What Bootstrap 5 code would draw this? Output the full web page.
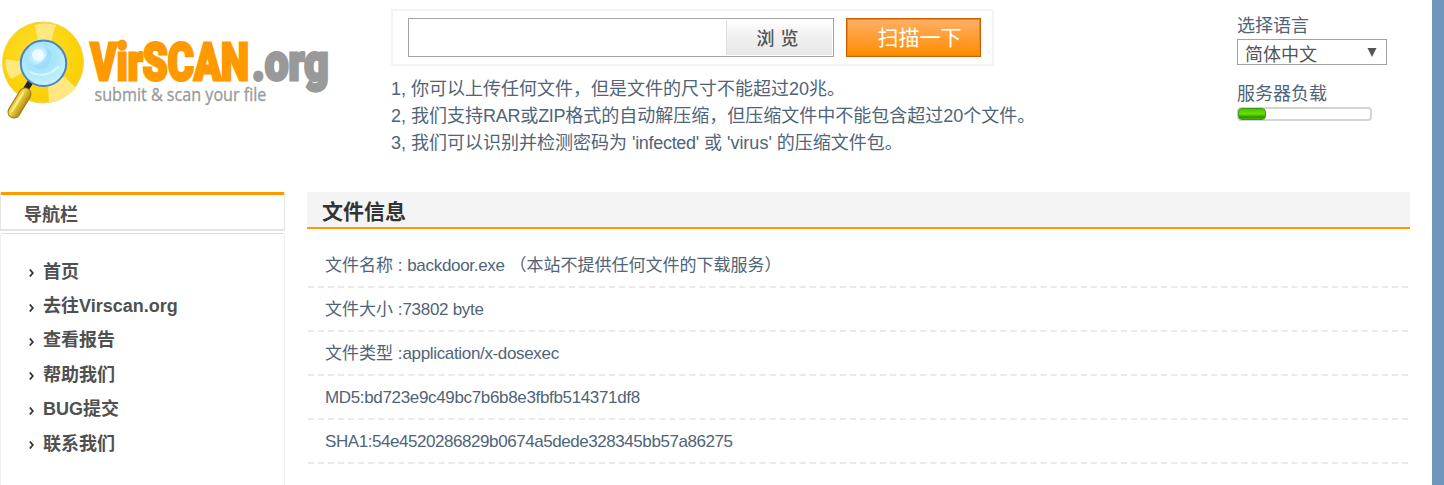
<!DOCTYPE html>
<html lang="zh-CN">
<head>
<meta charset="utf-8">
<meta name="viewport" content="width=device-width, initial-scale=1">
<title>VirSCAN.org</title>
<link href="https://cdn.jsdelivr.net/npm/bootstrap@5.3.0/dist/css/bootstrap.min.css" rel="stylesheet">
<style>
html{height:100%;overflow:hidden}
body{height:100%;overflow:hidden;background:#7096be;color:#4f6478;font-family:"Liberation Sans","Noto Sans CJK SC",sans-serif;font-size:18px;line-height:27px}
.page{width:1432px;height:485px;background:#fff}
.top{height:192px}
.logo-col{width:391px}
.form-col{width:846px;padding-top:9px}
.scan-box{width:603px;height:57px;border:2px solid #f4f4f4;padding:7px 11px 7px 15px}
.file-field{width:426px;height:39px;border:1px solid #a3a3a3}
.browse{width:106px;margin:1px;border:0;border-left:1px solid #ddd;background:linear-gradient(#fff,#f1f1f1 45%,#e8e8e8);color:#555;font-size:18px;padding:0 4px 0 0;line-height:38px;font-weight:500;word-spacing:1px}
.scan{width:135px;height:39px;margin-left:12px;border:1px solid #cf6000;box-shadow:inset 0 0 0 1px #ee8420;background:linear-gradient(#ffb066,#ff8c00);color:#fff;font-size:21px;line-height:37px;padding:0 0 0 12px}
.tips{margin-top:10px}
.tight{letter-spacing:-.3px}
.hash{letter-spacing:-.34px}
.hash-long{letter-spacing:-.44px}
.side-col{padding-top:13px}
.lang{width:150px;height:26px;margin-top:-1px;border:1px solid #a3a3a3;color:#555;padding:0 9px 0 7px;line-height:31px}
.load-label{height:42px;line-height:26px}
.load{width:135px;height:14px;border:2px solid #d4d4d4;border-radius:4px}
.load-bar{height:12px;width:28px;margin:-1px 0 0 -1px;border:1px solid #3c9808;border-radius:4px;background:linear-gradient(#45c800,#6ae000 50%,#2d9000 80%,#48b800)}
.side{width:285px;color:#505050;font-weight:700}
.side-head{height:39px;border:1px solid #e6e6e6;border-top:3px solid #f90;border-bottom:2px solid #e4e4e4;border-radius:2px 2px 0 0;padding-left:23px;line-height:40px}
.side-body{height:252px;margin-top:2px;border:1px solid #eee;border-top:1px solid #ddd;border-bottom:0;border-radius:3px 3px 0 0;padding:21px 0 0 28px}
.side-item{height:34.4px;gap:9px}
.side-item svg{margin-top:2px}
.info{width:1103px;margin-left:22px}
.info-title{height:37px;background:#f4f4f4;border-bottom:2px solid #f90;color:#333;font-size:21px;font-weight:700;line-height:39px;padding-left:15px}
.info-rows{margin:15px 2px 0 1px;font-size:17px}
.info-row{height:44px;border-bottom:2px dashed #eaeaea;padding-left:17px;line-height:44px;white-space:pre}
</style>
</head>
<body>
<div class="page">
  <header class="top d-flex">
    <div class="logo-col">
      <svg width="340" height="130" viewBox="0 0 340 130" role="img">
        <defs>
          <radialGradient id="ring" cx=".45" cy=".4" r=".6"><stop offset="0" stop-color="#fde23c"/><stop offset=".9" stop-color="#fbd000"/><stop offset="1" stop-color="#f4cf30"/></radialGradient>
          <radialGradient id="lens" cx=".42" cy=".35" r=".65"><stop offset="0" stop-color="#e6faff"/><stop offset=".45" stop-color="#a5e3ff"/><stop offset="1" stop-color="#c5f3ff"/></radialGradient>
          <linearGradient id="grip" gradientUnits="userSpaceOnUse" x1="12" y1="99" x2="25" y2="107"><stop offset="0" stop-color="#c99b18"/><stop offset=".35" stop-color="#f5dc50"/><stop offset="1" stop-color="#b08408"/></linearGradient>
        </defs>
        <circle cx="43" cy="62.5" r="40.5" fill="url(#ring)" stroke="#f3d54c"/>
        <path d="M35 25Q45 22 56 25L51 41H38ZM6 59L22 62 24 72 11 79Q4 69 6 59ZM48 84L65 77 76 88Q64 100 49 103Z" fill="#ffe880"/>
        <path d="M31 81L26 89" stroke="#292418" stroke-width="6"/>
        <path d="M25 94L14 112" stroke="#a27c10" stroke-width="13" stroke-linecap="round"/>
        <path d="M25 94L14 112" stroke="url(#grip)" stroke-width="11" stroke-linecap="round"/>
        <path d="M23 93L12 111" stroke="#ffee90" stroke-width="2" stroke-linecap="round"/>
        <circle cx="43.500" cy="63.300" r="22.700" fill="url(#lens)" stroke="#4c82c8" stroke-width="2"/>
        <path d="M29 63Q37 69 46 57Q48 51 44 46Q56 52 49 64Q42 74 29 63Z" fill="#7fcff8" opacity=".45"/>
        <path d="M30 72Q46 80 59 66" fill="none" stroke="#effdff" stroke-width="2" opacity=".6"/>
        <circle cx="38" cy="55" r="6" fill="#f5feff" opacity=".75"/>
        <g font-family="Roboto,sans-serif" font-weight="900" font-size="52" stroke-width="3">
          <text transform="translate(90.5 80) scale(.755 1)" textLength="210" lengthAdjust="spacingAndGlyphs" fill="#f90" stroke="#f90">VirSCAN</text>
          <text transform="translate(252 80) scale(.79 1)" textLength="97" lengthAdjust="spacingAndGlyphs" fill="#999" stroke="#999">.org</text>
        </g>
        <text transform="translate(94.5 101) scale(.9 1)" textLength="191" lengthAdjust="spacingAndGlyphs" font-family="Open Sans,sans-serif" font-size="17.500" fill="#999" stroke="#999" stroke-width=".3">submit &amp; scan your file</text>
      </svg>
    </div>
    <div class="form-col">
      <div class="scan-box d-flex">
        <div class="file-field d-flex justify-content-end"><button class="browse" type="button">浏 览</button></div>
        <button class="scan" type="button">扫描一下</button>
      </div>
      <div class="tips">
        <div>1, 你可以上传任何文件，但是文件的尺寸不能超过20兆。</div>
        <div>2, 我们支持<span class="tight">RAR</span>或<span class="tight">ZIP</span>格式的自动解压缩，但压缩文件中不能包含超过20个文件。</div>
        <div>3, 我们可以识别并检测密码为 <span class="tight">'infected'</span> 或 'virus' 的压缩文件包。</div>
      </div>
    </div>
    <div class="side-col">
      <div>选择语言</div>
      <div class="lang d-flex justify-content-between"><span>简体中文</span>
        <svg width="10" height="10" viewBox="0 0 10 10" class="mt-2"><path d="M.5 0H9.500L5 9Z" fill="#555"/></svg></div>
      <div class="load-label pt-3">服务器负载</div>
      <div class="load"><div class="load-bar"></div></div>
    </div>
  </header>
  <main class="d-flex">
    <nav class="side">
      <div class="side-head">导航栏</div>
      <div class="side-body">
        <div class="side-item d-flex align-items-center"><svg width="5" height="8" viewBox="0 0 5 8"><path d="M.8.5L3.800 4 .8 7.500" fill="none" stroke="#333" stroke-width="1.800"/></svg>首页</div>
        <div class="side-item d-flex align-items-center"><svg width="5" height="8" viewBox="0 0 5 8"><path d="M.8.5L3.800 4 .8 7.500" fill="none" stroke="#333" stroke-width="1.800"/></svg>去往Virscan.org</div>
        <div class="side-item d-flex align-items-center"><svg width="5" height="8" viewBox="0 0 5 8"><path d="M.8.5L3.800 4 .8 7.500" fill="none" stroke="#333" stroke-width="1.800"/></svg>查看报告</div>
        <div class="side-item d-flex align-items-center"><svg width="5" height="8" viewBox="0 0 5 8"><path d="M.8.5L3.800 4 .8 7.500" fill="none" stroke="#333" stroke-width="1.800"/></svg>帮助我们</div>
        <div class="side-item d-flex align-items-center"><svg width="5" height="8" viewBox="0 0 5 8"><path d="M.8.5L3.800 4 .8 7.500" fill="none" stroke="#333" stroke-width="1.800"/></svg>BUG提交</div>
        <div class="side-item d-flex align-items-center"><svg width="5" height="8" viewBox="0 0 5 8"><path d="M.8.5L3.800 4 .8 7.500" fill="none" stroke="#333" stroke-width="1.800"/></svg>联系我们</div>
      </div>
    </nav>
    <section class="info">
      <div class="info-title">文件信息</div>
      <div class="info-rows">
        <div class="info-row">文件名称 : <span class="tight">backdoor.exe</span> （本站不提供任何文件的下载服务）</div>
        <div class="info-row">文件大小 :<span class="tight">73802 byte</span></div>
        <div class="info-row">文件类型 :<span class="hash">application/x-dosexec</span></div>
        <div class="info-row hash">MD5:bd723e9c49bc7b6b8e3fbfb514371df8</div>
        <div class="info-row hash-long">SHA1:54e4520286829b0674a5dede328345bb57a86275</div>
      </div>
    </section>
  </main>
</div>
<script src="https://cdn.jsdelivr.net/npm/bootstrap@5.3.0/dist/js/bootstrap.bundle.min.js"></script>
</body>
</html>
